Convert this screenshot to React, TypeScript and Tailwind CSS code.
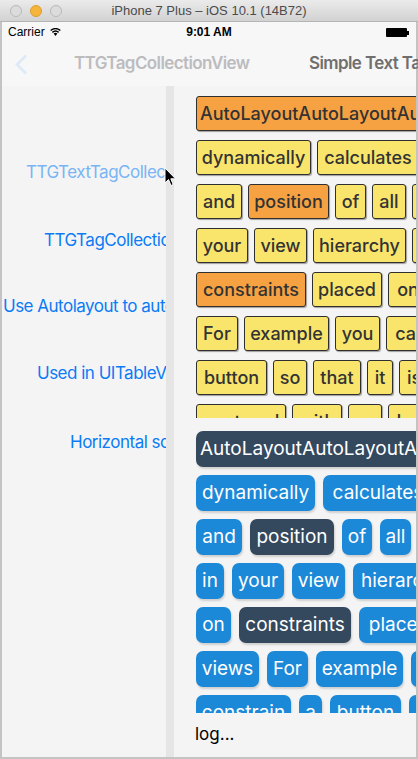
import React from "react";

type Tag = [string, string, boolean?];

const yRows: Tag[][] = [
  [["AutoLayoutAutoLayoutAutoLayout", "w-[300px] justify-start pl-[3px]", true]],
  [["dynamically", "w-[115px]"], ["calculates", "w-[102px]"]],
  [["and", "w-[46px]"], ["position", "w-[81px]", true], ["of", "w-[31px]"], ["all", "w-[34px]"], ["the", "w-[40px]"]],
  [["your", "w-[52px]"], ["view", "w-[53px]"], ["hierarchy", "w-[93px]"], ["of", "w-[31px]"]],
  [["constraints", "w-[110px]", true], ["placed", "w-[70px]"], ["on", "w-[40px]"]],
  [["For", "w-[42px]"], ["example", "w-[85px]"], ["you", "w-[45px]"], ["can", "w-[50px]"]],
  [["button", "w-[71px]"], ["so", "w-[34px]"], ["that", "w-[48px]"], ["it", "w-[26px]"], ["is", "w-[30px]"]],
  [["centered", "w-[90px]"], ["with", "w-[50px]"], ["an", "w-[34px]"], ["Image", "w-[70px]"]],
];

const bRows: Tag[][] = [
  [["AutoLayoutAutoLayoutAutoLayout", "w-[300px] justify-start pl-[4px]", true]],
  [["dynamically", "w-[119px]"], ["calculates", "w-[110px]"]],
  [["and", "w-[46px]"], ["position", "w-[84px]", true], ["of", "w-[30px]"], ["all", "w-[31px]"], ["the", "w-[40px]"]],
  [["in", "w-[28px]"], ["your", "w-[52px]"], ["view", "w-[53px]"], ["hierarchy", "w-[100px]"]],
  [["on", "w-[35px]"], ["constraints", "w-[112px]", true], ["placed", "w-[80px]"]],
  [["views", "w-[63px]"], ["For", "w-[41px]"], ["example", "w-[87px]"], ["you", "w-[50px]"]],
  [["constrain", "w-[95px]"], ["a", "w-[23px]"], ["button", "w-[71px]"], ["so", "w-[40px]"]],
];

function YTag({ t }: { t: Tag }) {
  return (
    <div
      className={`${t[1]} shrink-0 h-[35px] flex items-center justify-center whitespace-nowrap overflow-hidden rounded-[3px] border border-[#2f2f2f] shadow-[1px_1px_1px_rgba(0,0,0,0.35)] text-[18px] font-medium text-[#333333] ${
        t[2] ? "bg-[#f6a243]" : "bg-[#f9e56c]"
      }`}
    >
      {t[0]}
    </div>
  );
}

function BTag({ t }: { t: Tag }) {
  return (
    <div
      className={`${t[1]} shrink-0 h-[36px] flex items-center justify-center whitespace-nowrap overflow-hidden rounded-[7px] shadow-[1px_2px_2px_rgba(0,0,0,0.15)] text-[19px] font-normal text-white ${
        t[2] ? "bg-[#34495e]" : "bg-[#1c88d8]"
      }`}
    >
      {t[0]}
    </div>
  );
}

export default function App() {
  return (
    <div className="w-[418px] h-[759px] flex flex-col overflow-hidden bg-[#f4f4f4] [font-family:Inter,'Noto_Sans',sans-serif] relative">
      {/* mac title bar */}
      <div className="h-[22px] shrink-0 relative flex items-center justify-center bg-gradient-to-b from-[#ebebeb] to-[#d2d2d2] border-b border-[#b5b5b5]">
        <div className="absolute left-[10px] top-[5px] flex gap-[8px]">
          <div className="w-[12px] h-[12px] rounded-full bg-[#dcdcdc] border border-[#b9b9b9]" />
          <div className="w-[12px] h-[12px] rounded-full bg-[#f5b53b] border border-[#dc9f2e]" />
          <div className="w-[12px] h-[12px] rounded-full bg-[#dcdcdc] border border-[#b9b9b9]" />
        </div>
        <span className="text-[13px] text-[#4b4b4b] [font-family:'Liberation_Sans',sans-serif]">
          iPhone 7 Plus – iOS 10.1 (14B72)
        </span>
      </div>

      <div className="flex-1 flex flex-col border-x-2 border-b-2 border-[#c4c4c4] min-h-0">
        {/* status bar */}
        <div className="h-[20px] shrink-0 bg-[#f7f7f7] relative flex items-center">
          <div className="flex items-center pl-[6px] gap-[5px]">
            <span className="text-[12px] text-black [font-family:'Liberation_Sans',sans-serif]">Carrier</span>
            <svg width="11" height="8" viewBox="0 0 11 8">
              <path d="M5.5 8 L3.6 5.6 A3 3 0 0 1 7.4 5.6 Z" fill="black" />
              <path d="M1.9 3.8 A5.5 5.5 0 0 1 9.1 3.8 L8.2 4.9 A4.1 4.1 0 0 0 2.8 4.9 Z" fill="black" />
              <path d="M0.2 1.9 A8 8 0 0 1 10.8 1.9 L9.9 3 A6.6 6.6 0 0 0 1.1 3 Z" fill="black" />
            </svg>
          </div>
          <span className="absolute left-0 right-0 text-center text-[12px] font-semibold text-black [font-family:'Liberation_Sans',sans-serif]">
            9:01 AM
          </span>
          <div className="absolute left-[384px] top-[6px] flex items-center">
            <div className="w-[21px] h-[9px] bg-black rounded-[1px]" />
            <div className="w-[2px] h-[4px] bg-black" />
          </div>
        </div>

        {/* nav bar */}
        <div className="h-[44px] shrink-0 bg-[#f7f7f7] relative flex items-center">
          <svg className="absolute left-[13px] top-[12px]" width="13" height="21" viewBox="0 0 13 21">
            <path d="M11 1.5 L2 10.5 L11 19.5" stroke="#dde9f7" strokeWidth="2.6" fill="none" />
          </svg>
          <span className="absolute left-[72px] text-[17px] font-semibold text-[#bcbcbf] tracking-[-0.6px] whitespace-nowrap">
            TTGTagCollectionView
          </span>
          <span className="absolute left-[307px] text-[17px] font-semibold text-[#6f6f6f] tracking-[-0.6px] whitespace-nowrap">
            Simple Text Tags
          </span>
        </div>

        {/* content */}
        <div className="flex-1 flex min-h-0">
          {/* left panel */}
          <div className="w-[164px] shrink-0 overflow-hidden flex flex-col text-[17px] text-[#0b7bf6] whitespace-nowrap leading-[22px] tracking-[-0.5px]">
            <div className="mt-[75px] pl-[24px] text-[#79b5f5]">TTGTextTagCollectionView</div>
            <div className="mt-[46px] pl-[42px]">TTGTagCollectionView</div>
            <div className="mt-[44px] pl-[1px]">Use Autolayout to auto size</div>
            <div className="mt-[45px] pl-[35px]">Used in UITableViewCell</div>
            <div className="mt-[47px] pl-[68px]">Horizontal scroll</div>
          </div>
          <div className="w-[8px] shrink-0 bg-[#e5e5e5]" />
          {/* right panel */}
          <div className="flex-1 min-w-0 flex flex-col overflow-hidden">
            <div className="h-[332px] shrink-0 overflow-hidden pt-[10px] pl-[22px] flex flex-col gap-[9px]">
              {yRows.map((r, i) => (
                <div key={i} className="flex gap-[6px]">
                  {r.map((t, j) => (
                    <YTag key={j} t={t} />
                  ))}
                </div>
              ))}
            </div>
            <div className="h-[295px] shrink-0 overflow-hidden pt-[13px] pl-[22px] flex flex-col gap-[8px]">
              {bRows.map((r, i) => (
                <div key={i} className="flex gap-[8px]">
                  {r.map((t, j) => (
                    <BTag key={j} t={t} />
                  ))}
                </div>
              ))}
            </div>
            <div className="flex-1 flex items-center pl-[21px] text-[17px] text-black">log...</div>
          </div>
        </div>
      </div>

      {/* cursor */}
      <svg className="absolute left-[164px] top-[167px]" width="13" height="20" viewBox="0 0 13 20">
        <path d="M1 1 L1 16 L4.5 12.5 L7 18.5 L9.2 17.5 L6.8 11.8 L11.5 11.8 Z" fill="black" stroke="white" strokeWidth="1" />
      </svg>
    </div>
  );
}
